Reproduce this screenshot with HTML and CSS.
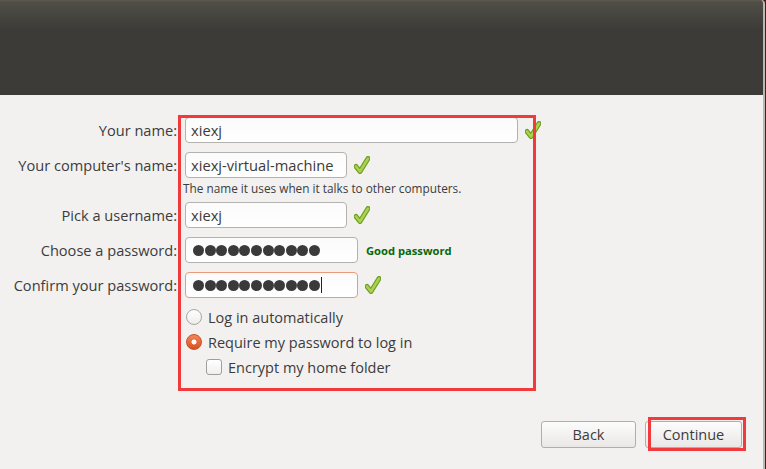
FILE: index.html
```html
<!DOCTYPE html>
<html>
<head>
<meta charset="utf-8">
<link rel="stylesheet" href="styles.css">
</head>
<body>
<div class="window">
  <header class="banner"></header>
  <main class="content">
    <div class="form">
      <div class="row">
        <label class="label">Your name:</label>
        <div class="field w-long"><span class="val">xiexj</span></div>
        <svg class="check" viewBox="0 0 16 18"><path d="M2 10.5 L6 15.5 L14 2.5" class="ck-out"/><path d="M2 10.5 L6 15.5 L14 2.5" class="ck-in"/></svg>
      </div>
      <div class="row">
        <label class="label">Your computer's name:</label>
        <div class="field w-mid"><span class="val">xiexj-virtual-machine</span></div>
        <svg class="check" viewBox="0 0 16 18"><path d="M2 10.5 L6 15.5 L14 2.5" class="ck-out"/><path d="M2 10.5 L6 15.5 L14 2.5" class="ck-in"/></svg>
      </div>
      <div class="hint">The name it uses when it talks to other computers.</div>
      <div class="row">
        <label class="label">Pick a username:</label>
        <div class="field w-mid"><span class="val">xiexj</span></div>
        <svg class="check" viewBox="0 0 16 18"><path d="M2 10.5 L6 15.5 L14 2.5" class="ck-out"/><path d="M2 10.5 L6 15.5 L14 2.5" class="ck-in"/></svg>
      </div>
      <div class="row">
        <label class="label">Choose a password:</label>
        <div class="field w-pw"><span class="dots"><i></i><i></i><i></i><i></i><i></i><i></i><i></i><i></i><i></i><i></i><i></i></span></div>
        <span class="strength">Good password</span>
      </div>
      <div class="row">
        <label class="label">Confirm your password:</label>
        <div class="field w-pw focus"><span class="dots"><i></i><i></i><i></i><i></i><i></i><i></i><i></i><i></i><i></i><i></i><i></i></span><span class="caret"></span></div>
        <svg class="check" viewBox="0 0 16 18"><path d="M2 10.5 L6 15.5 L14 2.5" class="ck-out"/><path d="M2 10.5 L6 15.5 L14 2.5" class="ck-in"/></svg>
      </div>
      <div class="opts">
        <div class="opt"><span class="radio"></span><span>Log in automatically</span></div>
        <div class="opt"><span class="radio on"></span><span>Require my password to log in</span></div>
        <div class="opt sub"><span class="box"></span><span>Encrypt my home folder</span></div>
      </div>
      <div class="mark mark-form"></div>
    </div>
    <footer class="buttons">
      <button class="btn back">Back</button>
      <button class="btn cont">Continue<span class="mark mark-btn"></span></button>
    </footer>
  </main>
</div>
</body>
</html>
```

FILE: styles.css
```css
* { box-sizing: border-box; }
html, body { margin: 0; padding: 0; }
body {
  width: 766px;
  height: 469px;
  overflow: hidden;
  background: #4a201c;
  font-family: "Open Sans", "DejaVu Sans", sans-serif;
  color: #3c3c3c;
}
.window {
  width: 765px;
  height: 469px;
  display: flex;
  flex-direction: column;
  background: #f2f1f0;
  border-right: 2px solid #bab8b5;
  border-top-right-radius: 4px;
  overflow: hidden;
}
.banner {
  height: 95px;
  flex: none;
  background: linear-gradient(#5d5b53 0, #504e47 2px, #3c3b37 30px, #3c3b37 100%);
  border-right: 1px solid #2f2e2b;
  margin-right: -2px;
}
.content {
  flex: 1;
  display: flex;
  flex-direction: column;
  position: relative;
}
.form {
  padding-top: 22px;
  display: flex;
  flex-direction: column;
}
.row {
  display: flex;
  align-items: center;
  height: 26px;
  margin-bottom: 9px;
}
.label {
  width: 177px;
  text-align: right;
  font-size: 14.6px;
  margin-right: 8px;
  color: #3c3c3c;
  white-space: nowrap;
}
.field {
  height: 26px;
  border: 1px solid #b4b2ae;
  border-radius: 4px;
  background: linear-gradient(#fbfbfb, #ffffff);
  display: flex;
  align-items: center;
  padding-left: 5px;
  font-size: 14.7px;
  color: #3c3b37;
  position: relative;
  white-space: nowrap;
}
.field.focus { border-color: #eb9a7b; }
.w-long { width: 333px; }
.w-mid { width: 162px; }
.w-pw { width: 173px; }
.check {
  width: 16px;
  height: 18px;
  margin-left: 7px;
}
.ck-out { fill: none; stroke: #6f9c22; stroke-width: 5px; stroke-linejoin: round; stroke-linecap: round; }
.ck-in { fill: none; stroke: #a9d24e; stroke-width: 2.6px; stroke-linejoin: round; stroke-linecap: round; }
.hint {
  margin: -6px 0 6px 183px;
  font-size: 11.8px;
  line-height: 15px;
  height: 15px;
  color: #3c3c3c;
  white-space: nowrap;
}
.dots { display: flex; gap: 0.6px; margin-left: 2px; }
.dots i {
  display: block;
  width: 11px;
  height: 11px;
  border-radius: 50%;
  background: #3a3a3a;
}
.caret {
  width: 1px;
  height: 16px;
  background: #222;
  margin-left: 1px;
}
.strength {
  margin-left: 8px;
  font-size: 11.2px;
  font-weight: bold;
  color: #0a670a;
}
.opts {
  display: flex;
  flex-direction: column;
  gap: 5px;
  padding-left: 186px;
}
.opt {
  display: flex;
  align-items: center;
  height: 20px;
  font-size: 14.5px;
  color: #3c3c3c;
}
.opt.sub { padding-left: 20px; }
.radio {
  width: 16px;
  height: 16px;
  border-radius: 50%;
  border: 1px solid #a8a6a2;
  background: linear-gradient(#ffffff, #ececec);
  margin-right: 6px;
  flex: none;
}
.radio.on {
  border-color: #c4502a;
  background: radial-gradient(circle, #ffffff 0, #ffffff 2.2px, transparent 2.8px), linear-gradient(#f0875c, #dd4f1f);
}
.box {
  width: 16px;
  height: 16px;
  border-radius: 3px;
  border: 1px solid #a09e9a;
  background: linear-gradient(#ffffff, #efefef);
  margin-right: 6px;
  flex: none;
}
.buttons {
  margin-top: auto;
  display: flex;
  justify-content: flex-end;
  gap: 9px;
  padding: 0 21px 21px 0;
}
.btn {
  height: 27px;
  border: 1px solid #b0aeaa;
  border-radius: 3px;
  background: linear-gradient(#fcfcfc, #e9e8e6);
  font-family: "Open Sans", "DejaVu Sans", sans-serif;
  font-size: 14.5px;
  color: #3c3c3c;
  padding: 0;
  position: relative;
}
.back { width: 95px; }
.cont { width: 97px; }
.mark {
  position: absolute;
  border: 3px solid #f03a3c;
  pointer-events: none;
}
.mark-form {
  left: 178px;
  top: 20px;
  width: 358px;
  height: 276px;
}
.mark-btn {
  left: 2px;
  top: -5px;
  width: 98px;
  height: 34px;
}
```
